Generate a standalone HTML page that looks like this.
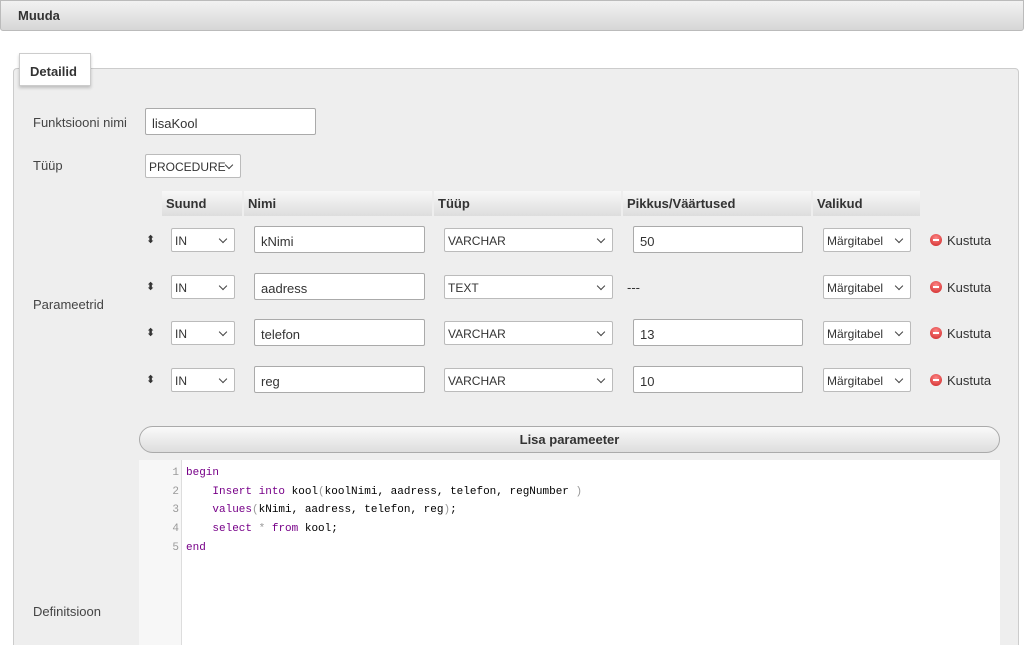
<!DOCTYPE html>
<html><head><style>
*{box-sizing:border-box;margin:0;padding:0}
html,body{width:1024px;height:645px;overflow:hidden}
body{background:#fff;font-family:"Liberation Sans",sans-serif;font-size:13px;color:#333;position:relative}
.a{position:absolute}
.hdr{left:0;top:0;width:1024px;height:31px;background:linear-gradient(#f2f2f2,#d6d6d6);border:1px solid #bbb;border-radius:0 0 3px 3px}
.fs{left:13px;top:68px;width:1006px;height:600px;background:#eee;border:1px solid #ccc;border-radius:4px}
.leg{left:19px;top:53px;width:72px;height:33px;background:#fff;border:1px solid #ccc;box-shadow:0 2px 3px rgba(0,0,0,.2);font-weight:bold;padding:10px 0 0 10px}
.lbl{color:#444}
.inp{background:#fff;border:1px solid #aaa;border-radius:2px;height:27px;padding:7px 0 0 6px;font-size:13px;color:#333}
.sel{background:#fff;border:1px solid #bbb;border-radius:2px;height:24px;padding:5px 0 0 3px;font-size:12px;white-space:nowrap}
.sel:after{content:"";position:absolute;right:8px;top:7px;width:5px;height:5px;border-right:1.5px solid #444;border-bottom:1.5px solid #444;transform:rotate(45deg)}
.th{top:191px;height:25px;background:linear-gradient(#f8f8f8,#ddd);font-weight:bold;padding:5px 0 0 4px}
.del{width:12px;height:12px;border-radius:50%;background:radial-gradient(circle at 50% 35%,#f88,#c22)}
.del:after{content:"";position:absolute;left:3px;top:5px;width:6px;height:2px;background:#fff}
.btn{left:139px;top:426px;width:861px;height:27px;border:1px solid #aaa;border-radius:14px;background:linear-gradient(#fafafa,#ddd);text-align:center;font-weight:bold;padding-top:5px}
.code{font-family:"Liberation Mono",monospace;font-size:11px;line-height:18.7px}
.k{color:#708}.p{color:#999}
</style></head><body>
<div class="a hdr"></div>
<div class="a" style="left:18px;top:8px;font-weight:bold">Muuda</div>
<div class="a fs"></div>
<div class="a leg">Detailid</div>
<div class="a lbl" style="left:33px;top:115px">Funktsiooni nimi</div>
<div class="a inp" style="left:145px;top:108px;width:171px">lisaKool</div>
<div class="a lbl" style="left:33px;top:158px">Tüüp</div>
<div class="a sel" style="left:145px;top:154px;width:96px">PROCEDURE</div>
<div class="a lbl" style="left:33px;top:297px">Parameetrid</div>
<div class="a lbl" style="left:33px;top:604px">Definitsioon</div>
<div class="a th" style="left:162px;width:80px">Suund</div>
<div class="a th" style="left:244px;width:188px">Nimi</div>
<div class="a th" style="left:434px;width:187px">Tüüp</div>
<div class="a th" style="left:623px;width:188px">Pikkus/Väärtused</div>
<div class="a th" style="left:813px;width:107px">Valikud</div>

<div class="a" style="left:146px;top:233px;font-size:11px">⬍</div>
<div class="a sel" style="left:171px;top:228px;width:64px">IN</div>
<div class="a inp" style="left:254px;top:226px;width:171px">kNimi</div>
<div class="a sel" style="left:444px;top:228px;width:169px">VARCHAR</div>
<div class="a inp" style="left:633px;top:226px;width:170px">50</div>
<div class="a sel" style="left:823px;top:228px;width:88px">Märgitabel</div>
<div class="a del" style="left:930px;top:234px"></div><div class="a" style="left:947px;top:233px">Kustuta</div>

<div class="a" style="left:146px;top:280px;font-size:11px">⬍</div>
<div class="a sel" style="left:171px;top:275px;width:64px">IN</div>
<div class="a inp" style="left:254px;top:273px;width:171px">aadress</div>
<div class="a sel" style="left:444px;top:275px;width:169px">TEXT</div>
<div class="a" style="left:627px;top:280px">---</div>
<div class="a sel" style="left:823px;top:275px;width:88px">Märgitabel</div>
<div class="a del" style="left:930px;top:281px"></div><div class="a" style="left:947px;top:280px">Kustuta</div>

<div class="a" style="left:146px;top:326px;font-size:11px">⬍</div>
<div class="a sel" style="left:171px;top:321px;width:64px">IN</div>
<div class="a inp" style="left:254px;top:319px;width:171px">telefon</div>
<div class="a sel" style="left:444px;top:321px;width:169px">VARCHAR</div>
<div class="a inp" style="left:633px;top:319px;width:170px">13</div>
<div class="a sel" style="left:823px;top:321px;width:88px">Märgitabel</div>
<div class="a del" style="left:930px;top:327px"></div><div class="a" style="left:947px;top:326px">Kustuta</div>

<div class="a" style="left:146px;top:373px;font-size:11px">⬍</div>
<div class="a sel" style="left:171px;top:368px;width:64px">IN</div>
<div class="a inp" style="left:254px;top:366px;width:171px">reg</div>
<div class="a sel" style="left:444px;top:368px;width:169px">VARCHAR</div>
<div class="a inp" style="left:633px;top:366px;width:170px">10</div>
<div class="a sel" style="left:823px;top:368px;width:88px">Märgitabel</div>
<div class="a del" style="left:930px;top:374px"></div><div class="a" style="left:947px;top:373px">Kustuta</div>

<div class="a btn">Lisa parameeter</div>
<div class="a" style="left:139px;top:460px;width:861px;height:185px;background:#fff"></div>
<div class="a" style="left:139px;top:460px;width:43px;height:185px;background:#f7f7f7;border-right:1px solid #ddd"></div>
<div class="a code p" style="left:139px;top:464px;width:40px;text-align:right">1<br>2<br>3<br>4<br>5</div>
<div class="a code" style="left:186px;top:464px;white-space:pre;color:#000"><span class="k">begin</span>
    <span class="k">Insert into</span> kool<span class="p">(</span>koolNimi, aadress, telefon, regNumber <span class="p">)</span>
    <span class="k">values</span><span class="p">(</span>kNimi, aadress, telefon, reg<span class="p">)</span>;
    <span class="k">select</span> <span class="p">*</span> <span class="k">from</span> kool;
<span class="k">end</span></div>
</body></html>
